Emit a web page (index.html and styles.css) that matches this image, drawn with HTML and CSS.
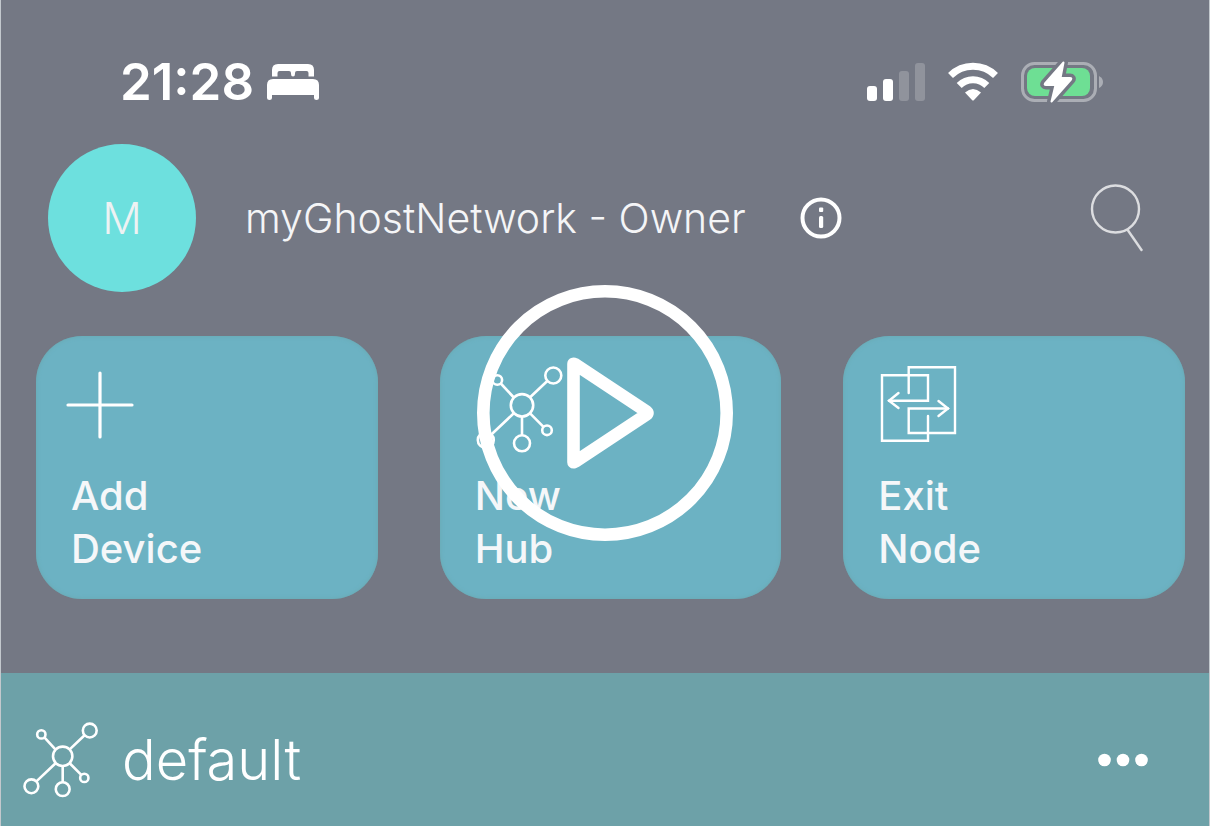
FILE: index.html
```html
<!DOCTYPE html>
<html lang="en">
<head>
<meta charset="utf-8">
<meta name="viewport" content="width=device-width, initial-scale=1">
<title>myGhostNetwork</title>
<link rel="stylesheet" href="styles.css">
</head>
<body>
<svg class="symbols" aria-hidden="true">
  <symbol id="hub" viewBox="0 0 96 96">
    <g fill="none" stroke="currentColor">
      <circle cx="54" cy="44.3" r="11.2"/>
      <circle cx="85.300" cy="14.5" r="8"/>
      <circle cx="29.300" cy="19" r="4.8"/>
      <circle cx="79" cy="69.3" r="4.8"/>
      <circle cx="54" cy="82.3" r="8"/>
      <circle cx="17.800" cy="79" r="8"/>
      <path d="M62.100 36.3 79.300 20M45.800 36.500 32.800 22.500M62.100 52.3 75.500 65.8M54 55.5V74.3M45.800 52.3 23.600 73.3"/>
    </g>
  </symbol>
</svg>
<main class="screen">
  <div class="status">
    <div class="status-group">
      <time class="clock">21:28</time>
      <svg class="bed" viewBox="0 0 54 40" role="img" aria-label="Sleep focus">
        <path fill="currentColor" d="M6 14.500V8Q6 2 12 2H42Q48 2 48 8V14.500H42.500V11Q42.500 9 40.500 9H31Q29 9 29 11V12Q29 14.500 27 14.500T25 12V11Q25 9 23 9H13.500Q11.500 9 11.500 11V14.500ZM1 36V23Q1 17 7 17H47Q53 17 53 23V36Q53 38 50.500 38Q48 38 48 36V33H6V36Q6 38 3.500 38Q1 38 1 36Z"/>
      </svg>
    </div>
    <div class="status-group status-icons">
      <svg class="signal" viewBox="0 0 60 40" role="img" aria-label="Signal, two of four bars">
        <g fill="currentColor"><rect x="1" y="24" width="10" height="15" rx="3"/><rect x="17" y="17" width="10" height="22" rx="3"/><g opacity=".2"><rect x="33" y="9" width="10" height="30" rx="3"/><rect x="49" y="1" width="10" height="38" rx="3"/></g></g>
      </svg>
      <svg class="wifi" viewBox="0 0 52 40" role="img" aria-label="Wi-Fi">
        <g fill="none" stroke="currentColor" stroke-width="7"><path d="M3.500 13.500A32 32 0 0 1 48.500 13.500"/><path d="M12.200 23.500A19.500 19.500 0 0 1 39.800 23.500"/></g>
        <path fill="currentColor" d="M18 30.500Q26 23.500 34 30.500L27 38Q26 39 25 38Z"/>
      </svg>
      <svg class="battery" viewBox="0 0 84 44" role="img" aria-label="Battery charging">
        <rect x="2.500" y="3.500" width="73" height="37" rx="12" fill="none" stroke="#abaeb5" stroke-width="3"/>
        <path d="M79 16Q83 18 83 22T79 28Z" fill="#abaeb5"/>
        <rect x="7" y="8" width="63" height="28" rx="8" fill="#6edf94"/>
        <path class="bolt-gap" d="M43.500 2.500 25 23.500Q24 25 26 25H35.500L31.500 41.500 51 19.500Q52 18 50 18H40.500Z"/>
        <path d="M43.500 2.500 25 23.500Q24 25 26 25H35.500L31.500 41.500 51 19.500Q52 18 50 18H40.500Z" fill="currentColor" stroke="currentColor" stroke-width="2" stroke-linejoin="round"/>
      </svg>
    </div>
  </div>

  <header class="account">
    <div class="avatar">M</div>
    <h1 class="network">myGhostNetwork - Owner</h1>
    <button class="icon-button" type="button" aria-label="Network information">
      <svg class="info" viewBox="0 0 42 42"><circle cx="21" cy="21" r="18.500" fill="none" stroke="currentColor" stroke-width="4"/><rect x="19" y="10.500" width="4.200" height="4.500" rx="1" fill="currentColor"/><rect x="19" y="19" width="4.200" height="12" rx="1.500" fill="currentColor"/></svg>
    </button>
    <button class="icon-button search-button" type="button" aria-label="Search">
      <svg class="search" viewBox="0 0 54 68"><g fill="none" stroke="currentColor" stroke-width="2.400" stroke-linecap="round"><circle cx="25.500" cy="25" r="23.500"/><path d="M37.700 46 51.500 66"/></g></svg>
    </button>
  </header>

  <nav class="actions" aria-label="Actions">
    <button class="card" type="button">
      <svg class="card-icon" viewBox="0 0 96 96" aria-hidden="true"><path d="M4 44H68M36 12V76" fill="none" stroke="currentColor" stroke-width="3.200" stroke-linecap="round"/></svg>
      <span class="card-label">Add<br>Device</span>
    </button>
    <button class="card" type="button">
      <svg class="card-icon" aria-hidden="true"><use href="#hub"/></svg>
      <span class="card-label">New<br>Hub</span>
    </button>
    <button class="card" type="button">
      <svg class="card-icon" viewBox="0 0 96 96" aria-hidden="true"><g fill="none" stroke="currentColor" stroke-width="2.400" stroke-linecap="round"><path d="M18 39.700H57V14.300H11V79.700H57V55M37.700 32V6.300H84V72H37.700V47.500H77"/><path d="M27.500 32 18 39.700 27.500 47M67.500 40 77 47.500 67.500 55"/></g></svg>
      <span class="card-label">Exit<br>Node</span>
    </button>
  </nav>

  <section class="hub-row">
    <svg class="hub-icon" aria-hidden="true"><use href="#hub"/></svg>
    <h2 class="hub-name">default</h2>
    <button class="icon-button more-button" type="button" aria-label="More options">
      <svg class="dots" viewBox="0 0 52 16"><g fill="currentColor"><circle cx="7.500" cy="8" r="6.300"/><circle cx="26" cy="8" r="6.300"/><circle cx="44.500" cy="8" r="6.300"/></g></svg>
    </button>
  </section>

  <div class="overlay">
    <button class="icon-button" type="button" aria-label="Play video">
      <svg class="play" viewBox="0 0 256 256"><circle cx="128" cy="128" r="121.700" fill="none" stroke="currentColor" stroke-width="12.600"/><path d="M96.500 79V177.300Q96.500 177.300 98.500 176.500L169.500 129.500Q171.500 128 169.500 126.500L98.500 79.500Q96.500 78.500 96.500 79Z" fill="none" stroke="currentColor" stroke-width="12.600" stroke-linejoin="round"/></svg>
    </button>
  </div>
</main>
</body>
</html>
```
FILE: styles.css
```css
*, *::before, *::after {
  box-sizing: border-box;
}

body {
  margin: 0;
  background: #747884;
  color: #fff;
  font-family: Inter, "Open Sans", sans-serif;
}

button {
  font: inherit;
  color: inherit;
  border: 0;
  cursor: pointer;
}

svg {
  display: block;
  flex: none;
}

.symbols {
  position: absolute;
  width: 0;
  height: 0;
}

.screen {
  position: relative;
  display: flex;
  flex-direction: column;
  min-height: 100vh;
  border: solid #c3c8cd;
  border-width: 0 1px;
  overflow: hidden;
}

.status {
  display: flex;
  align-items: center;
  justify-content: space-between;
  padding: 51px 105px 31px 119px;
}

.status-group {
  display: flex;
  align-items: center;
  gap: 12px;
}

.status-icons {
  gap: 21px;
}

.clock {
  font-size: 51px;
  line-height: 62px;
  font-weight: 600;
}

.bed {
  width: 54px;
  height: 40px;
}

.signal {
  width: 60px;
  height: 40px;
}

.wifi {
  width: 52px;
  height: 40px;
}

.battery {
  width: 84px;
  height: 44px;
}

.bolt-gap {
  fill: #747884;
  stroke: #747884;
  stroke-width: 9;
  stroke-linejoin: round;
}

.account {
  display: flex;
  align-items: center;
  padding: 0 65px 0 47px;
}

.avatar {
  display: grid;
  place-items: center;
  flex: none;
  width: 148px;
  height: 148px;
  border-radius: 50%;
  background: #6de0de;
  color: #eef2f3;
  font-size: 44px;
  font-weight: 300;
}

.network {
  margin: 0 54px 0 49px;
  font-size: 41px;
  line-height: 52px;
  font-weight: 300;
  color: #f4f5f7;
  white-space: nowrap;
}

.icon-button {
  padding: 0;
  background: none;
}

.info {
  width: 42px;
  height: 42px;
}

.search-button {
  margin-left: auto;
  color: #dcdde0;
}

.search {
  width: 54px;
  height: 68px;
}

.actions {
  display: grid;
  grid-template-columns: repeat(3, 1fr);
  gap: 62px;
  padding: 44px 24px 74px 35px;
}

.card {
  display: flex;
  flex-direction: column;
  align-items: flex-start;
  gap: 12px;
  padding: 25px 28px 24px;
  border-radius: 46px;
  background: #6cb2c3;
  box-shadow: inset 0 0 4px #6aa8b0;
  text-align: left;
}

.card-icon {
  width: 96px;
  height: 96px;
  stroke-width: 2.6px;
}

.card-label {
  padding-left: 7px;
  font-size: 40px;
  line-height: 53px;
  font-weight: 500;
  color: #f5f7f9;
}

.hub-row {
  flex: 1;
  display: flex;
  align-items: center;
  padding: 24px 60px 4px 15px;
  background: #6da1a8;
}

.hub-icon {
  width: 83px;
  height: 83px;
  stroke-width: 3px;
}

.hub-name {
  margin: 0 0 0 23px;
  font-size: 56px;
  line-height: 62px;
  font-weight: 300;
}

.more-button {
  margin-left: auto;
}

.dots {
  width: 52px;
  height: 16px;
}

.overlay {
  position: absolute;
  inset: 0;
  display: grid;
  place-items: center;
  pointer-events: none;
}

.overlay .icon-button {
  pointer-events: auto;
}

.play {
  width: 256px;
  height: 256px;
}
```
